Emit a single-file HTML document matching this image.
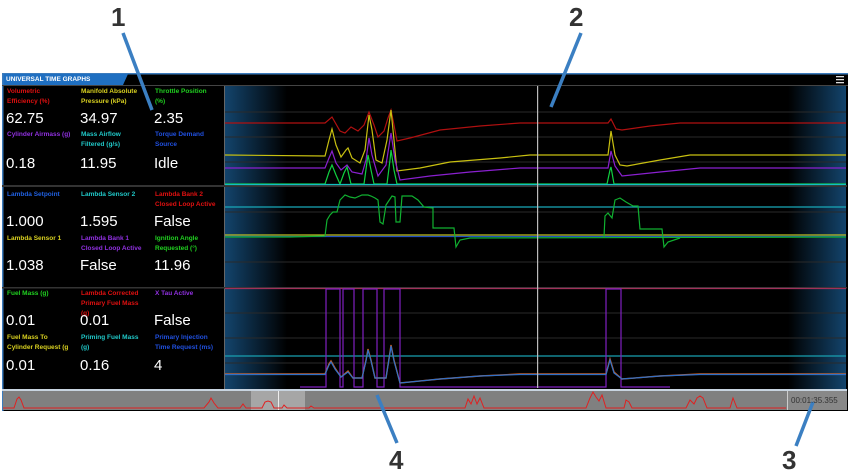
<!DOCTYPE html>
<html><head><meta charset="utf-8"><style>
*{margin:0;padding:0;box-sizing:border-box}
body{width:850px;height:472px;background:#fff;position:relative;overflow:hidden;font-family:"Liberation Sans",sans-serif}
.l{position:absolute;font-size:6.5px;font-weight:bold;line-height:10px;width:72px;white-space:nowrap;overflow:hidden}
.v{position:absolute;font-size:15px;color:#fff;line-height:16px}
.n{position:absolute;font-size:26px;font-weight:bold;color:#333;line-height:26px}
</style></head><body>
<svg width="850" height="472" style="position:absolute;left:0;top:0">
<defs>
<linearGradient id="gl" x1="0" x2="1"><stop offset="0" stop-color="#13446c"/><stop offset="1" stop-color="#000"/></linearGradient>
<linearGradient id="gr" x1="0" x2="1"><stop offset="0" stop-color="#000"/><stop offset="1" stop-color="#13446c"/></linearGradient>
</defs>
<rect x="2" y="73" width="846" height="338" fill="#000"/>
<rect x="2" y="73" width="846" height="1.5" fill="#3b7bbd"/>
<polygon points="2,74 128,74 123,85 2,85" fill="#1f6fc1"/>
<rect x="2" y="74" width="1.5" height="337" fill="#3b7bbd"/>
<rect x="2" y="85" width="846" height="1" fill="#444"/>
<g fill="#ddd"><rect x="836" y="76" width="8" height="1.3"/><rect x="836" y="79" width="8" height="1.3"/><rect x="836" y="82" width="8" height="1.3"/></g>
<!-- graph area -->
<rect x="225" y="86" width="622" height="303" fill="#000"/>
<rect x="225" y="86" width="62" height="303" fill="url(#gl)"/>
<rect x="788" y="86" width="58" height="303" fill="url(#gr)"/>
<rect x="224" y="86" width="1" height="303" fill="#666"/>
<rect x="2" y="185" width="845" height="2" fill="#333"/>
<rect x="2" y="287" width="845" height="1.5" fill="#333"/>
<g stroke="#2a2a2a" stroke-width="1">
<line x1="225" y1="112" x2="846" y2="112"/><line x1="225" y1="137" x2="846" y2="137"/><line x1="225" y1="162" x2="846" y2="162"/>
<line x1="225" y1="212" x2="846" y2="212"/><line x1="225" y1="262" x2="846" y2="262"/>
<line x1="225" y1="313" x2="846" y2="313"/><line x1="225" y1="338" x2="846" y2="338"/><line x1="225" y1="363" x2="846" y2="363"/>
</g>
<g fill="none" stroke-width="1.2">
<!-- pane1 -->
<polyline stroke="#b01010" points="225,123 325,123 332,117 340,131 345,133 351,127 358,131 364,125 369,112 374,125 378,137 384,131 388,118 391,110 394,125 397,141 410,138 440,130 480,126 520,123 608,123 611,119 616,129 622,130 650,126 680,123 846,123"/>
<polyline stroke="#c8c010" points="225,155 325,156 329,140 332,129 336,145 341,157 346,150 348,148 352,158 360,163 365,150 369,115 372,130 376,160 382,163 387,140 391,110 394,140 397,171 420,168 450,162 500,158 530,155 608,155 611,131 615,155 620,165 627,166 660,160 690,155 846,155"/>
<polyline stroke="#8a20d0" points="225,168 325,168 329,158 332,151 336,163 341,170 347,165 352,172 362,174 366,160 369,138 372,155 378,176 386,165 391,133 395,160 400,180 430,176 470,172 520,168 608,168 611,151 615,166 622,176 660,172 700,168 846,168"/>
<polyline stroke="#10d040" points="225,184 325,184 329,172 332,165 336,175 340,184 344,173 347,167 351,184 364,184 367,162 368,155 371,170 374,184 387,184 390,160 391,150 394,170 397,184 607,184 610,170 611,167 614,184 846,184"/>
<polyline stroke="#10c0c0" points="225,184.5 846,184.5"/>
<!-- pane2 -->
<polyline stroke="#18a8b8" points="225,207 846,207"/>
<polyline stroke="#c0c020" points="225,235 846,235"/>
<polyline stroke="#2050c0" points="225,236.5 846,236.5"/>
<polyline stroke="#10b030" points="225,237 290,237 325,236 327,220 330,215 333,212 337,212 340,200 345,195 350,197 355,198 362,195 368,195 371,196 375,198 378,200 380,222 383,224 386,205 392,196 395,197 396,222 400,222 402,196 412,196 418,200 424,207 433,208 433,228 454,228 456,247 460,240 470,238 846,237"/>
<polyline stroke="#10b030" points="604,237 605,216 608,213 612,218 615,200 620,198 626,202 633,206 638,206 640,229 662,229 664,247 668,242 680,238"/>
<!-- pane3 -->
<polyline stroke="#a0305a" points="225,288.5 846,288.5"/>
<polyline stroke="#18a0b0" points="225,356 846,356"/>
<polyline stroke="#8020c0" points="300,387 326,387 326,289 340,289 340,387 343,387 343,289 354,289 354,387 363,387 363,289 377,289 377,387 384,387 384,289 400,289 400,387 606,387 606,289 621,289 621,387 670,387"/>
<polyline stroke="#d06020" stroke-width="1.4" points="225,374 325,374 329,364 331,361 335,368 341,377 348,371 353,378 362,378 366,360 368,349 371,360 375,378 386,378 390,352 391,345 394,360 400,383 440,379 480,376 520,374 606,374 610,359 614,372 622,379 660,376 700,374 846,374"/>
<polyline stroke="#3070c8" points="225,374.5 325,374.5 329,365 331,362 335,369 341,377 348,372 353,378 362,378 366,361 368,350 371,361 375,378 386,378 390,353 391,346 394,361 400,383 440,379 480,376 520,374.5 606,374.5 610,360 614,373 622,379 660,376 700,374.5 846,374.5"/>
</g>
<rect x="537" y="86" width="1.2" height="302" fill="#bbb"/>
<!-- bottom strip -->
<rect x="2" y="389" width="845" height="2" fill="#c8d4e0"/>
<rect x="3" y="391" width="784" height="19" fill="#808080"/>
<rect x="251" y="391" width="54" height="19" fill="#a6a6a6"/>
<rect x="278" y="391" width="1" height="19" fill="#eee"/>
<rect x="787" y="391" width="60" height="19" fill="#888"/>
<rect x="787" y="391" width="1" height="19" fill="#ccc"/>
<polyline fill="none" stroke="#e02020" stroke-width="1" points="3,408 14,408 17,399 19,397 21,400 24,408 204,408 209,402 211,398 214,403 218,408 240,408 243,404 246,408 262,408 265,402 268,401 271,402 274,408 282,408 284,405 287,408 309,408 311,406 314,408 465,408 468,399 471,404 474,396 477,404 480,398 484,408 586,408 590,398 593,392 596,397 599,401 602,395 606,408 624,408 626,400 629,402 632,408 686,408 690,400 694,404 697,398 700,396 703,398 707,408 730,408 733,398 737,408 786,408"/>
<!-- callouts -->
<g stroke="#3b7fc2" stroke-width="3.5" stroke-linecap="butt">
<line x1="123" y1="33" x2="152" y2="110"/>
<line x1="581" y1="33" x2="551" y2="107"/>
<line x1="813" y1="402" x2="796" y2="446"/>
<line x1="377" y1="395" x2="397" y2="443"/>
</g>
</svg>
<div style="position:absolute;left:6px;top:75px;font-size:6.5px;font-weight:bold;color:#fff;line-height:9px">UNIVERSAL TIME GRAPHS</div>
<div class="n" style="left:111px;top:4px">1</div>
<div class="n" style="left:569px;top:4px">2</div>
<div class="n" style="left:782px;top:447px">3</div>
<div class="n" style="left:389px;top:447px">4</div>
<div style="position:absolute;left:791px;top:396px;font-size:8px;color:#333">00:01:35.355</div>

<div class="l" style="left:7px;top:87px;color:#e01010">Volumetric<br>Efficiency (%)</div>
<div class="l" style="left:81px;top:87px;color:#d8d020">Manifold Absolute<br>Pressure (kPa)</div>
<div class="l" style="left:155px;top:87px;color:#20d020">Throttle Position<br>(%)</div>
<div class="v" style="left:6px;top:111px">62.75</div>
<div class="v" style="left:80px;top:111px">34.97</div>
<div class="v" style="left:154px;top:111px">2.35</div>
<div class="l" style="left:7px;top:130px;color:#9030e0">Cylinder Airmass (g)</div>
<div class="l" style="left:81px;top:130px;color:#20c8c8">Mass Airflow<br>Filtered (g/s)</div>
<div class="l" style="left:155px;top:130px;color:#2050e0">Torque Demand<br>Source</div>
<div class="v" style="left:6px;top:156px">0.18</div>
<div class="v" style="left:80px;top:156px">11.95</div>
<div class="v" style="left:154px;top:156px">Idle</div>

<div class="l" style="left:7px;top:190px;color:#2060e0">Lambda Setpoint</div>
<div class="l" style="left:81px;top:190px;color:#20c8c8">Lambda Sensor 2</div>
<div class="l" style="left:155px;top:190px;color:#e01010">Lambda Bank 2<br>Closed Loop Active</div>
<div class="v" style="left:6px;top:214px">1.000</div>
<div class="v" style="left:80px;top:214px">1.595</div>
<div class="v" style="left:154px;top:214px">False</div>
<div class="l" style="left:7px;top:234px;color:#d8d020">Lambda Sensor 1</div>
<div class="l" style="left:81px;top:234px;color:#9030e0">Lambda Bank 1<br>Closed Loop Active</div>
<div class="l" style="left:155px;top:234px;color:#20d020">Ignition Angle<br>Requested (°)</div>
<div class="v" style="left:6px;top:258px">1.038</div>
<div class="v" style="left:80px;top:258px">False</div>
<div class="v" style="left:154px;top:258px">11.96</div>

<div class="l" style="left:7px;top:289px;color:#20d020">Fuel Mass (g)</div>
<div class="l" style="left:81px;top:289px;color:#e01010">Lambda Corrected<br>Primary Fuel Mass<br>(g)</div>
<div class="l" style="left:155px;top:289px;color:#9030e0">X Tau Active</div>
<div class="v" style="left:6px;top:313px">0.01</div>
<div class="v" style="left:80px;top:313px">0.01</div>
<div class="v" style="left:154px;top:313px">False</div>
<div class="l" style="left:7px;top:333px;color:#d8d020">Fuel Mass To<br>Cylinder Request (g</div>
<div class="l" style="left:81px;top:333px;color:#20c8c8">Priming Fuel Mass<br>(g)</div>
<div class="l" style="left:155px;top:333px;color:#2050e0">Primary Injection<br>Time Request (ms)</div>
<div class="v" style="left:6px;top:358px">0.01</div>
<div class="v" style="left:80px;top:358px">0.16</div>
<div class="v" style="left:154px;top:358px">4</div>
</body></html>
